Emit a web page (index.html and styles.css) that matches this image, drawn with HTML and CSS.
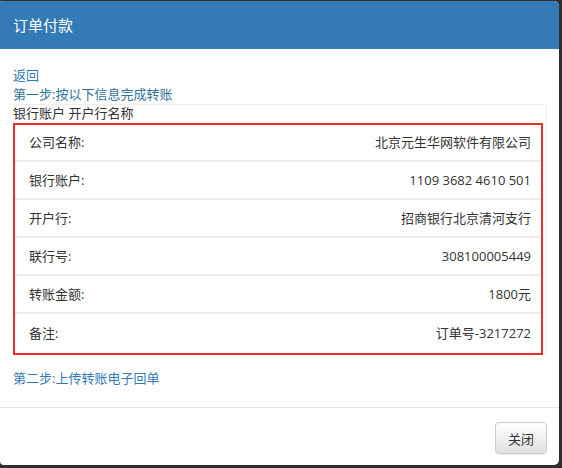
FILE: index.html
```html
<!DOCTYPE html>
<html lang="zh-CN">
<head>
<meta charset="utf-8">
<title>订单付款</title>
<link rel="stylesheet" href="styles.css">
</head>
<body>
<div class="modal">
  <div class="modal-header">订单付款</div>
  <div class="modal-body">
    <a class="link" href="#">返回</a>
    <div class="step">第一步:按以下信息完成转账</div>
    <div class="panel">
      <div class="panel-head">银行账户 开户行名称</div>
      <div class="info">
        <div class="row"><span>公司名称:</span><span>北京元生华网软件有限公司</span></div>
        <div class="row"><span>银行账户:</span><span>1109 3682 4610 501</span></div>
        <div class="row"><span>开户行:</span><span>招商银行北京清河支行</span></div>
        <div class="row"><span>联行号:</span><span>308100005449</span></div>
        <div class="row"><span>转账金额:</span><span>1800元</span></div>
        <div class="row"><span>备注:</span><span>订单号-3217272</span></div>
      </div>
    </div>
    <a class="link step2" href="#">第二步:上传转账电子回单</a>
  </div>
  <div class="modal-footer">
    <button class="btn" type="button">关闭</button>
  </div>
</div>
</body>
</html>
```
FILE: styles.css
```css
html, body {
  margin: 0;
  padding: 0;
  background: #2e2e2e;
  width: 562px;
  height: 468px;
  overflow: hidden;
  font-family: "Open Sans", "Noto Sans CJK SC", sans-serif;
  font-size: 13px;
  color: #333;
}
.modal {
  margin-top: 1px;
  width: 559px;
  height: 464px;
  background: #fff;
  border-radius: 2px 5px 5px 4px;
  overflow: hidden;
  display: flex;
  flex-direction: column;
}
.modal-header {
  height: 48px;
  background: #337ab7;
  color: #fff;
  font-size: 15px;
  line-height: 48px;
  padding-left: 13px;
}
.modal-body {
  padding: 17px 12px 19px 13px;
  line-height: 19px;
  border-bottom: 1px solid #e5e5e5;
}
.link {
  display: block;
  color: #337ab7;
  text-decoration: none;
}
.step {
  color: #31739a;
}
.panel {
  border: 1px solid #eeeeee;
  border-left: none;
  border-radius: 0 4px 4px 0;
}
.panel-head {
  margin-top: -1px;
  height: 19px;
}
.info {
  border: 2px solid #f22b2b;
  width: 526px;
  margin-bottom: -2px;
}
.row {
  display: flex;
  justify-content: space-between;
  align-items: center;
  height: 36px;
  padding: 0 10px 0 14px;
  border-top: 2px solid #ececec;
}
.row:first-child {
  border-top: none;
  height: 35px;
}
.row:last-child {
  height: 39px;
}
.step2 {
  margin-top: 15px;
}
.modal-footer {
  flex: 1;
  display: flex;
  justify-content: flex-end;
  align-items: flex-start;
  padding: 14px 12px 0 0;
}
.btn {
  font-family: "Open Sans", "Noto Sans CJK SC", sans-serif;
  font-size: 13px;
  color: #333;
  height: 32px;
  width: 52px;
  padding: 0;
  border: 1px solid #cccccc;
  border-radius: 4px;
  background: linear-gradient(#ffffff, #e0e0e0);
  box-shadow: inset 0 1px 0 rgba(255,255,255,.15), 0 1px 1px rgba(0,0,0,.075);
}
```
